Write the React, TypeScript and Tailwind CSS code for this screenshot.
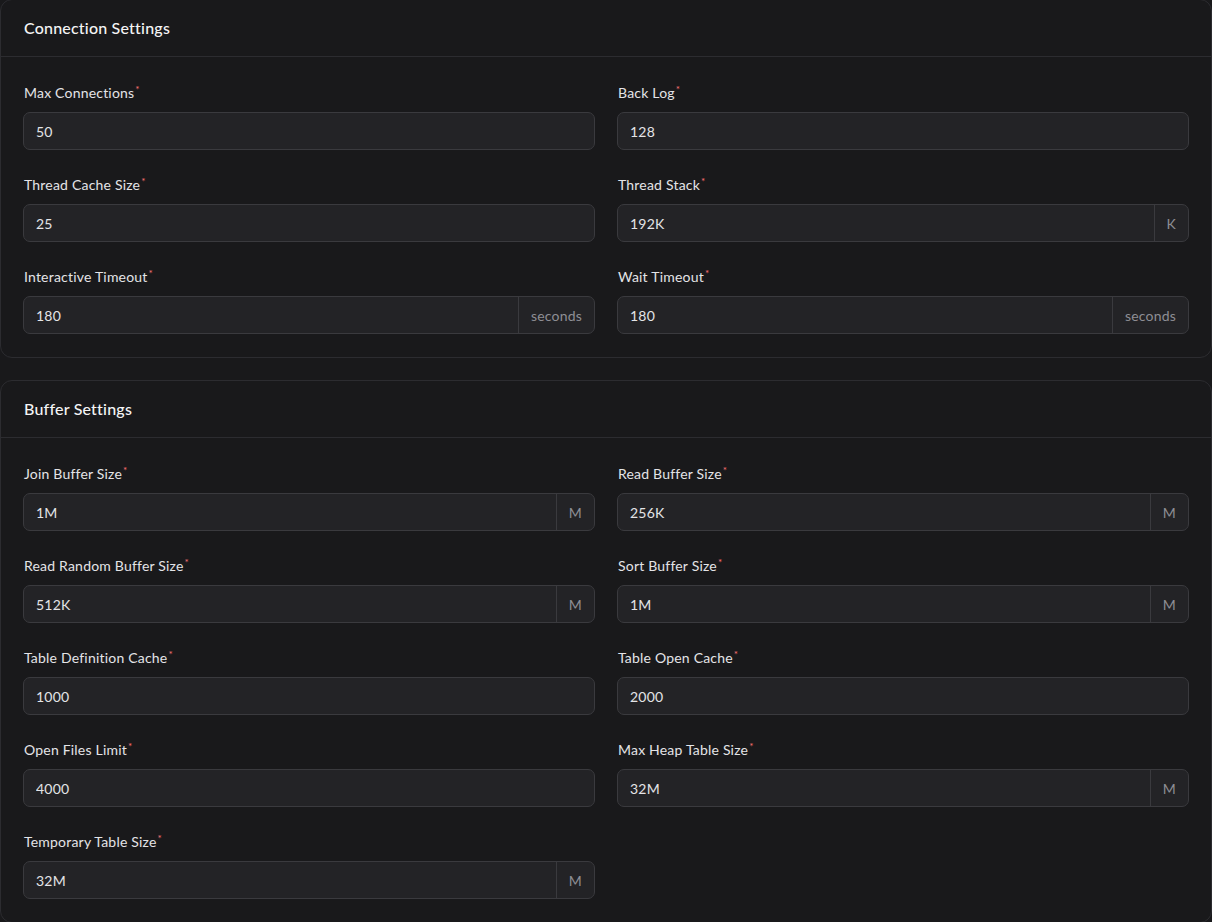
import React from "react";

type Field = { label: string; value: string; suffix?: string };

const connection: Field[] = [
  { label: "Max Connections", value: "50" },
  { label: "Back Log", value: "128" },
  { label: "Thread Cache Size", value: "25" },
  { label: "Thread Stack", value: "192K", suffix: "K" },
  { label: "Interactive Timeout", value: "180", suffix: "seconds" },
  { label: "Wait Timeout", value: "180", suffix: "seconds" },
];

const buffer: Field[] = [
  { label: "Join Buffer Size", value: "1M", suffix: "M" },
  { label: "Read Buffer Size", value: "256K", suffix: "M" },
  { label: "Read Random Buffer Size", value: "512K", suffix: "M" },
  { label: "Sort Buffer Size", value: "1M", suffix: "M" },
  { label: "Table Definition Cache", value: "1000" },
  { label: "Table Open Cache", value: "2000" },
  { label: "Open Files Limit", value: "4000" },
  { label: "Max Heap Table Size", value: "32M", suffix: "M" },
  { label: "Temporary Table Size", value: "32M", suffix: "M" },
];

function FieldBox({ f }: { f: Field }) {
  return (
    <div className="flex flex-col">
      <div className="h-5 mb-[10px] pt-px flex items-start text-[14px] leading-5 text-[#e4e4e7] pl-px">
        <span>{f.label}</span>
        <span className="text-[10px] leading-[10px] text-[#f87171] ml-[1px] mt-[1px]">*</span>
      </div>
      <div className="flex h-[38px] rounded-[7px] border border-[#3a3a3e] bg-[#232326] overflow-hidden">
        <input
          readOnly
          value={f.value}
          className="flex-1 min-w-0 bg-transparent px-3 text-[14px] tracking-[0.2px] text-[#e4e4e7] outline-none"
          style={{ fontFamily: "inherit" }}
        />
        {f.suffix && (
          <div className="flex items-center px-3 border-l border-[#3a3a3e] text-[14px] text-[#8e8e94]">
            {f.suffix}
          </div>
        )}
      </div>
    </div>
  );
}

function Card({ title, fields }: { title: string; fields: Field[] }) {
  return (
    <div className="border border-[#2c2c30] rounded-[12px] bg-[#19191b]">
      <div className="h-[57px] border-b border-[#2c2c30] flex items-center px-[23px] text-[16px] font-medium text-[#f4f4f5]">
        {title}
      </div>
      <div className="grid grid-cols-2 gap-x-[22px] gap-y-[24px] pt-[25px] pb-[23px] px-[22px]">
        {fields.map((f) => (
          <FieldBox key={f.label} f={f} />
        ))}
      </div>
    </div>
  );
}

export default function App() {
  return (
    <div
      className="min-h-[922px] bg-[#19191b] tracking-[0.2px]"
      style={{ fontFamily: "Lato, 'Noto Sans', sans-serif" }}
    >
      <div className="-mt-px flex flex-col gap-[22px]">
        <Card title="Connection Settings" fields={connection} />
        <Card title="Buffer Settings" fields={buffer} />
      </div>
    </div>
  );
}
